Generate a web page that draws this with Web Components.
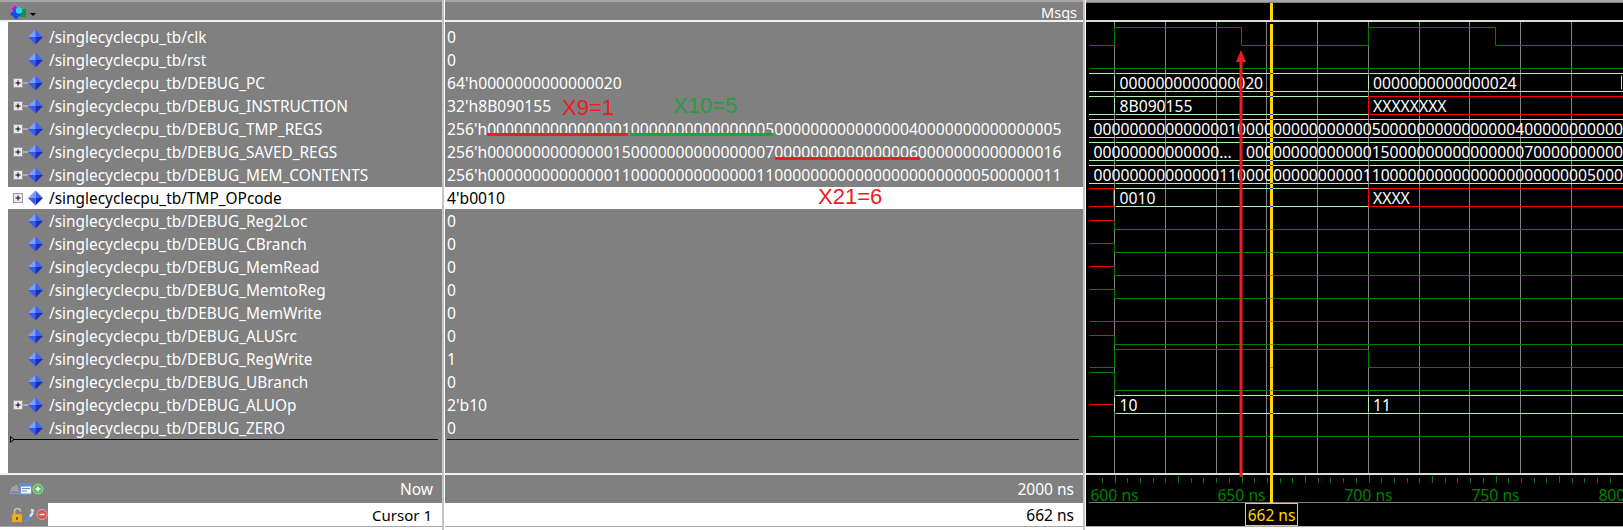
<!DOCTYPE html>
<html lang="en">
<head>
<meta charset="utf-8">
<title>Wave</title>
<style>
  html, body { margin: 0; padding: 0; background: #fff; }
  body { width: 1623px; height: 530px; overflow: hidden; font: 15.5px "Noto Sans", "Liberation Sans", sans-serif; }
</style>
</head>
<body>
<wave-window>
  <pane-shell kind="names" style="width:442px">
    <tool-icons slot="header" set="top"></tool-icons>
    <sig-name>/singlecyclecpu_tb/clk</sig-name>
    <sig-name>/singlecyclecpu_tb/rst</sig-name>
    <sig-name expand>/singlecyclecpu_tb/DEBUG_PC</sig-name>
    <sig-name expand>/singlecyclecpu_tb/DEBUG_INSTRUCTION</sig-name>
    <sig-name expand>/singlecyclecpu_tb/DEBUG_TMP_REGS</sig-name>
    <sig-name expand>/singlecyclecpu_tb/DEBUG_SAVED_REGS</sig-name>
    <sig-name expand>/singlecyclecpu_tb/DEBUG_MEM_CONTENTS</sig-name>
    <sig-name expand selected>/singlecyclecpu_tb/TMP_OPcode</sig-name>
    <sig-name>/singlecyclecpu_tb/DEBUG_Reg2Loc</sig-name>
    <sig-name>/singlecyclecpu_tb/DEBUG_CBranch</sig-name>
    <sig-name>/singlecyclecpu_tb/DEBUG_MemRead</sig-name>
    <sig-name>/singlecyclecpu_tb/DEBUG_MemtoReg</sig-name>
    <sig-name>/singlecyclecpu_tb/DEBUG_MemWrite</sig-name>
    <sig-name>/singlecyclecpu_tb/DEBUG_ALUSrc</sig-name>
    <sig-name>/singlecyclecpu_tb/DEBUG_RegWrite</sig-name>
    <sig-name>/singlecyclecpu_tb/DEBUG_UBranch</sig-name>
    <sig-name expand>/singlecyclecpu_tb/DEBUG_ALUOp</sig-name>
    <sig-name>/singlecyclecpu_tb/DEBUG_ZERO</sig-name>
    <drop-line marker style="margin:-1px 4px 0 3px"></drop-line>
    <foot-cell slot="now" tone="gray" pad="9"><tool-icons slot="icons" set="now"></tool-icons>Now</foot-cell>
    <foot-cell slot="cursor" tone="split" pad="10" style="font-size:15px"><tool-icons slot="icons" set="cursor"></tool-icons>Cursor 1</foot-cell>
  </pane-shell>
  <pane-sash></pane-sash>
  <pane-shell kind="values" style="width:638px">
    <foot-cell slot="header" tone="gray" pad="6" style="font-size:14.5px">Msgs</foot-cell>
    <sig-val>0</sig-val>
    <sig-val>0</sig-val>
    <sig-val>64'h0000000000000020</sig-val>
    <sig-val>32'h8B090155</sig-val>
    <sig-val>256'h0000000000000001000000000000000500000000000000040000000000000005</sig-val>
    <sig-val>256'h0000000000000015000000000000000700000000000000060000000000000016</sig-val>
    <sig-val>256'h0000000000000011000000000000001100000000000000000000000500000011</sig-val>
    <sig-val selected>4'b0010</sig-val>
    <sig-val>0</sig-val>
    <sig-val>0</sig-val>
    <sig-val>0</sig-val>
    <sig-val>0</sig-val>
    <sig-val>0</sig-val>
    <sig-val>0</sig-val>
    <sig-val>1</sig-val>
    <sig-val>0</sig-val>
    <sig-val>2'b10</sig-val>
    <sig-val>0</sig-val>
    <drop-line style="margin:-1px 4px 0 2px"></drop-line>
    <foot-cell slot="now" tone="gray" pad="9">2000 ns</foot-cell>
    <foot-cell slot="cursor" tone="white" pad="9">662 ns</foot-cell>
  </pane-shell>
  <pane-sash></pane-sash>
  <pane-shell kind="wave" style="width:537px">
    <wave-canvas></wave-canvas>
    <time-ruler slot="now"></time-ruler>
    <cursor-tag slot="cursor">662 ns</cursor-tag>
  </pane-shell>

  <note-mark style="left:562px;top:94px;color:#ed1c24">X9=1</note-mark>
  <note-mark style="left:673px;top:92px;color:#22a03c">X10=5</note-mark>
  <note-mark style="left:818px;top:183px;color:#ed1c24">X21=6</note-mark>
  <under-mark style="left:487px;top:133px;width:141px;background:#ed1c24"></under-mark>
  <under-mark style="left:630px;top:133px;width:143px;background:#22a03c"></under-mark>
  <under-mark style="left:775px;top:157px;width:145px;background:#ed1c24"></under-mark>
  <cursor-overlay></cursor-overlay>
</wave-window>

<script>
class WaveWindow extends HTMLElement {
  constructor() {
    super();
    this.attachShadow({ mode: 'open' }).innerHTML = `
      <style>
        :host { display: flex; position: relative; width: 1623px; height: 530px; background: #fff; overflow: hidden; }
      </style><slot></slot>`;
  }
}

class PaneShell extends HTMLElement {
  constructor() {
    super();
    this.attachShadow({ mode: 'open' }).innerHTML = `
      <style>
        :host { display: grid; flex: none; grid-template-rows: 3px 17px 2px 451px 2px 28px 23px 1px 3px; height: 530px; }
        .top { background: #a6a6a6; border-bottom: 1px solid #808080; box-sizing: border-box; }
        .line { background: #f0f0f0; }
        .base { background: #a8a8a8; }
        .hdr, .body, .now, .cur { min-width: 0; overflow: hidden; }
        .hdr, .now, .cur { background: #808080; }
        .body { background: #808080; display: flex; flex-direction: column; padding-top: 4px; box-sizing: border-box; }
        :host([kind=names]) .body { margin-left: 8px; }
        :host([kind=names]) { background: #fff; }
        :host([kind=wave]) .hdr, :host([kind=wave]) .now, :host([kind=wave]) .cur, :host([kind=wave]) .body { background: #000; padding: 0; }
        :host([kind=wave]) .line { background: #dcdcdc; }
      </style>
      <div class="top"></div>
      <div class="hdr"><slot name="header"></slot></div>
      <div class="line"></div>
      <div class="body"><slot></slot></div>
      <div class="line"></div>
      <div class="now"><slot name="now"></slot></div>
      <div class="cur"><slot name="cursor"></slot></div>
      <div class="base"></div>
      <div></div>`;
  }
}

class PaneSash extends HTMLElement {
  constructor() {
    super();
    this.attachShadow({ mode: 'open' }).innerHTML = `
      <style>:host { display: block; flex: none; width: 3px; height: 530px; background: linear-gradient(90deg, #c4c4c4 0 2px, #fff 2px 3px); }</style>`;
  }
}

class SigName extends HTMLElement {
  constructor() {
    super();
    this.attachShadow({ mode: 'open' }).innerHTML = `
      <style>
        :host { display: flex; align-items: center; height: 22px; margin-bottom: 1px; color: #fff; white-space: nowrap; flex: none; font-size: 15.4px; }
        :host([selected]) { background: #fff; color: #000; }
        svg { flex: none; display: block; margin-left: 5px; margin-right: 6px; }
        .box { display: none; }
        :host([expand]) .box { display: inline; }
        :host([selected]) .stem { display: none; }
      </style>
      <svg width="30" height="18" viewBox="0 0 30 18">
        <g class="box">
          <rect x="0.5" y="4.5" width="9" height="9" fill="#e8e8f0" stroke="#9a9aa0"/>
          <path d="M2.5 9h5M5 6.5v5" stroke="#000" fill="none"/>
          <path class="stem" d="M10 9h5" stroke="#d8d8d8" fill="none"/>
        </g>
        <path d="M22.5 1.5L15 9h7.5z" fill="#7f9cff"/>
        <path d="M22.5 1.5L30 9h-7.5z" fill="#3d66f0"/>
        <path d="M15 9l7.5 7.5V9z" fill="#3a5cec"/>
        <path d="M30 9l-7.5 7.5V9z" fill="#1c2fb4"/>
      </svg>
      <span><slot></slot></span>`;
  }
}

class SigVal extends HTMLElement {
  constructor() {
    super();
    this.attachShadow({ mode: 'open' }).innerHTML = `
      <style>
        :host { display: flex; align-items: center; height: 22px; margin-bottom: 1px; padding-left: 2px; color: #fff; white-space: nowrap; flex: none; font-size: 15.7px; }
        :host([selected]) { background: #fff; color: #000; }
      </style><slot></slot>`;
  }
}

class DropLine extends HTMLElement {
  constructor() {
    super();
    this.attachShadow({ mode: 'open' }).innerHTML = `
      <style>
        :host { display: block; height: 1px; background: #000; position: relative; flex: none; }
        svg { display: none; position: absolute; left: -1px; top: -3px; }
        :host([marker]) svg { display: block; }
      </style>
      <svg width="5" height="7" viewBox="0 0 5 7"><path d="M.5.5l3.5 3-3.5 3z" fill="#808080" stroke="#000"/></svg>`;
  }
}

class FootCell extends HTMLElement {
  static get observedAttributes() { return ['pad']; }
  constructor() {
    super();
    this.attachShadow({ mode: 'open' }).innerHTML = `
      <style>
        :host { display: flex; align-items: center; height: 100%; color: #fff; white-space: nowrap; box-sizing: border-box; }
        :host([tone=white]) { background: #fff; color: #000; }
        .icons { flex: none; height: 100%; display: flex; align-items: center; }
        .txt { flex: 1; text-align: right; padding-right: var(--p, 10px); align-self: stretch; display: flex; align-items: center; justify-content: flex-end; }
        :host([tone=split]) .txt { background: #fff; color: #000; }
      </style>
      <div class="icons"><slot name="icons"></slot></div>
      <div class="txt"><slot></slot></div>`;
  }
  attributeChangedCallback(n, o, v) { this.style.setProperty('--p', v + 'px'); }
}

class ToolIcons extends HTMLElement {
  constructor() {
    super();
    const sets = {
      top: `<svg width="38" height="17" viewBox="0 0 38 17">
          <path d="M15 1.500L10.500 6l4.500 4 4.500-4z" fill="#a828c0" stroke="#e468ec"/>
          <rect x="20" y="6" width="6" height="8" fill="#109848"/>
          <path d="M16 5.500L10 11l6 5.500L22 11z" fill="#1848f0"/>
          <circle cx="19" cy="7.500" r="3.200" fill="#20d8e8"/>
          <path d="M30 10h6l-3 3z" fill="#000"/>
        </svg>`,
      now: `<svg width="48" height="14" viewBox="0 0 48 14">
          <path d="M9 10l3-6h3v-2h2l2 5 1 3z" fill="#a0a0a0" stroke="#707070" stroke-width=".5"/>
          <path d="M9 11.500h11" stroke="#7f9fdc" stroke-width="1.500"/>
          <rect x="20.500" y="2" width="11" height="10" fill="#f0f4fc" stroke="#6b94d8"/>
          <rect x="20.500" y="2" width="11" height="2.500" fill="#5a8ad8"/>
          <path d="M22 6.500h8M22 9h5" stroke="#7a8aa8"/>
          <path d="M24 12l1 2 2-2z" fill="#6b94d8"/>
          <circle cx="38" cy="7" r="5" fill="#5cb85c" stroke="#a4dca4"/>
          <path d="M35.500 7h5M38 4.500v5" stroke="#fff" stroke-width="1.500"/>
        </svg>`,
      cursor: `<svg width="48" height="16" viewBox="0 0 48 16">
          <path d="M14.500 7V4.500a3 3 0 0 1 6 0" fill="none" stroke="#d8c8a0" stroke-width="1.500"/>
          <rect x="12" y="7" width="10" height="8" fill="#e8b030" stroke="#c89020" stroke-width=".6"/>
          <rect x="16" y="10" width="2" height="3" fill="#806010"/>
          <path d="M25.500 14.500l5-5.500" stroke="#5f90d8" stroke-width="3"/>
          <path d="M30 9.500l3-4M31 3l3 1" stroke="#dce4f4" stroke-width="2.500" fill="none"/>
          <circle cx="42" cy="7.500" r="5" fill="#e05050" stroke="#f0a0a0"/>
          <path d="M39.500 7.500h5" stroke="#fff" stroke-width="1.500"/>
        </svg>`
    };
    this.attachShadow({ mode: 'open' }).innerHTML = `
      <style>:host { display: flex; align-items: center; height: 100%; } svg { display: block; flex: none; }</style>
      ${sets[this.getAttribute('set')] || ''}`;
  }
}

const X0 = 1086, Y0 = 22;
const T600 = 1114.5, PX = 2.54;
const tx = ns => T600 + (ns - 600) * PX;

class WaveCanvas extends HTMLElement {
  constructor() {
    super();
    const G = '#007f00', R = '#ff0000', B = '#b4f0b4';
    const hi = n => 27.5 + 23 * n, lo = n => 45.5 + 23 * n;
    let s = '';
    const line = (x1, y1, x2, y2, c) => { s += `<path d="M${x1} ${y1}L${x2} ${y2}" stroke="${c}" fill="none"/>`; };
    for (let i = 0; i < 10; i++) {
      const x = Math.round(1114 + i * 50.75) + .5;
      line(x, Y0, x, 473, '#808080');
    }
    const E = 1623, S = 1090, Q = 1114.5, Z = 1368.5;
    s += `<path d="M${S} 45.500H${Q}V27.500H1241.500V45.500H${Z}V27.500H1495.500V45.500H${E}" stroke="${G}" fill="none"/>`;
    line(S, 68.5, E, 68.5, G);
    const bus = (n, c1, c2, c3, marks) => {
      const h = hi(n), l = lo(n);
      [h, l].forEach(y => {
        line(1089, y, Q, y, c1);
        line(Q + 1, y, Z, y, c2);
        line(Z + 1, y, E, y, c3);
      });
      (marks || [Q, Z]).forEach(x => {
        s += `<path d="M${x} ${h + 2}V${l - 2}" stroke="${B}" fill="none"/>`;
        if (x === Q && c1 === R) s += `<path d="M${x - 1} ${h}V${l}" stroke="${R}" fill="none"/>`;
        if (x === Z && c3 === R) s += `<path d="M${x} ${h}V${l}" stroke="${R}" fill="none"/>`;
      });
    };
    bus(2, B, B, B);
    s += `<path d="M1621.500 ${hi(2) + 2}V${lo(2) - 2}" stroke="${B}" fill="none"/>`;
    bus(3, B, B, R);
    bus(4, B, B, B, []);
    bus(5, B, B, B, []);
    bus(6, B, B, B, []);
    bus(7, R, B, R);
    [8, 9, 10, 11, 13].forEach(n => {
      const stub = 220.5 + 23 * (n - 8);
      line(S, stub, Q, stub, R);
      line(Q, stub, Q, lo(n), G);
      line(Q, lo(n), E, lo(n), G);
    });
    line(S, lo(12), E, lo(12), G);
    s += `<path d="M${S} ${lo(14)}H${Q}V${hi(14)}H${Z}V${lo(14)}H${E}" stroke="${G}" fill="none"/>`;
    s += `<path d="M${S} ${hi(15)}H${Q}V${lo(15)}H${E}" stroke="${G}" fill="none"/>`;
    line(1089, 404.5, Q, 404.5, R);
    [hi(16), lo(16)].forEach(y => line(Q + 1, y, E, y, B));
    s += `<path d="M${Q} ${hi(16) + 2}V${lo(16) - 2}M${Z} ${hi(16) + 2}V${lo(16) - 2}" stroke="${B}" fill="none"/>`;
    line(S, lo(17), E, lo(17), G);

    const t = (x, n, str) => `<text x="${x}" y="${37 + 23 * n + 5.500}" fill="#fff">${str}</text>`;
    s += t(1119.5, 2, '0000000000000020') + t(1373, 2, '0000000000000024');
    s += t(1119.5, 3, '8B090155') + t(1373, 3, 'XXXXXXXX');
    s += t(1093.5, 4, '0000000000000001000000000000000500000000000000040000000000000005');
    s += t(1093.5, 5, '00000000000000...') + t(1246, 5, '0000000000000015000000000000000700000000000000060000000000000016');
    s += t(1093.5, 6, '0000000000000011000000000000001100000000000000000000000500000011');
    s += t(1119.5, 7, '0010') + t(1373, 7, 'XXXX');
    s += t(1119.5, 16, '10') + t(1373, 16, '11');

    this.attachShadow({ mode: 'open' }).innerHTML = `
      <style>:host { display: block; height: 100%; font-size: 15.7px; } svg { display: block; font: inherit; }</style>
      <svg width="537" height="451" viewBox="${X0} ${Y0} 537 451">${s}</svg>`;
  }
}

class TimeRuler extends HTMLElement {
  constructor() {
    super();
    let s = '';
    for (let ns = 595; ns <= 800; ns += 5) {
      const x = Math.round(tx(ns)) + .5;
      const major = ns % 100 === 0, mid = ns % 25 === 0;
      s += `<path d="M${x} ${major ? 475 : mid ? 476 : 478}V483" stroke="#007f00" fill="none"/>`;
    }
    [600, 650, 700, 750, 800].forEach(ns => {
      s += `<text x="${tx(ns)}" y="500.500" text-anchor="middle" fill="#008000">${ns} ns</text>`;
    });
    s += `<path d="M1089 502.500H1623" stroke="#808080" fill="none"/>`;
    this.attachShadow({ mode: 'open' }).innerHTML = `
      <style>:host { display: block; height: 100%; font-size: 15.7px; } svg { display: block; font: inherit; }</style>
      <svg width="537" height="28" viewBox="${X0} 475 537 28">${s}</svg>`;
  }
}

class CursorTag extends HTMLElement {
  constructor() {
    super();
    this.attachShadow({ mode: 'open' }).innerHTML = `
      <style>
        :host { display: block; height: 100%; position: relative; }
        span { position: absolute; left: 159px; top: 0; width: 53px; height: 23px; box-sizing: border-box;
               border: 1px solid #ffd700; color: #ffd700; display: flex; align-items: center; justify-content: center; white-space: nowrap; }
      </style><span><slot></slot></span>`;
  }
}

class NoteMark extends HTMLElement {
  constructor() {
    super();
    this.attachShadow({ mode: 'open' }).innerHTML = `
      <style>:host { position: absolute; display: block; font: 22px/28px "Liberation Sans", sans-serif; white-space: nowrap; }</style><slot></slot>`;
  }
}

class UnderMark extends HTMLElement {
  constructor() {
    super();
    this.attachShadow({ mode: 'open' }).innerHTML = `
      <style>:host { position: absolute; display: block; height: 3px; }</style>`;
  }
}

class CursorOverlay extends HTMLElement {
  constructor() {
    super();
    let dots = '';
    for (let n = 2; n < 17; n++) {
      const bus = n <= 7 || n === 16;
      const c = bus ? '#3a3ac8' : '#f07020';
      if (bus) dots += `<rect x="1270" y="${27 + 23 * n}" width="3" height="1" fill="${c}"/>`;
      dots += `<rect x="1270" y="${45 + 23 * n}" width="3" height="1" fill="${c}"/>`;
    }
    this.attachShadow({ mode: 'open' }).innerHTML = `
      <style>:host { position: absolute; inset: 0; display: block; pointer-events: none; } svg { display: block; }</style>
      <svg width="1623" height="530" viewBox="0 0 1623 530">
        <rect x="1270" y="3" width="3" height="17" fill="#ffd700"/>
        <rect x="1270" y="24" width="3" height="479" fill="#ffd700"/>
        ${dots}
        <rect x="1239.500" y="60" width="3" height="417" fill="#ed1c24"/>
        <path d="M1241 50l5 12h-10z" fill="#ed1c24"/>
      </svg>`;
  }
}

customElements.define('wave-window', WaveWindow);
customElements.define('pane-shell', PaneShell);
customElements.define('pane-sash', PaneSash);
customElements.define('sig-name', SigName);
customElements.define('sig-val', SigVal);
customElements.define('drop-line', DropLine);
customElements.define('foot-cell', FootCell);
customElements.define('tool-icons', ToolIcons);
customElements.define('wave-canvas', WaveCanvas);
customElements.define('time-ruler', TimeRuler);
customElements.define('cursor-tag', CursorTag);
customElements.define('note-mark', NoteMark);
customElements.define('under-mark', UnderMark);
customElements.define('cursor-overlay', CursorOverlay);
</script>
</body>
</html>
